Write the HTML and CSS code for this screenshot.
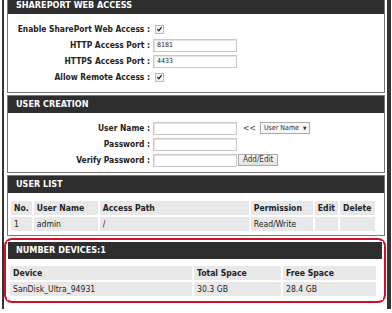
FILE: index.html
```html
<!DOCTYPE html>
<html lang="en">
  <head>
    <meta charset="UTF-8">
    <title>SharePort</title>
    <link rel="stylesheet" href="styles.css">
  </head>
  <body>
    <div id="page">
      <div class="box first">
        <div class="box-title">SHAREPORT WEB ACCESS</div>
        <div class="box-body form">
          <div class="row"><span class="label">Enable SharePort Web Access :</span><span class="check"><svg width="8" height="8" viewBox="0 0 8 8"><path d="M1.5 4.2 L3.2 6 L6.5 1.8" fill="none" stroke="#222" stroke-width="1.4"/></svg></span></div>
          <div class="row"><span class="label">HTTP Access Port :</span><span class="input">8181</span></div>
          <div class="row"><span class="label">HTTPS Access Port :</span><span class="input">4433</span></div>
          <div class="row"><span class="label">Allow Remote Access :</span><span class="check"><svg width="8" height="8" viewBox="0 0 8 8"><path d="M1.5 4.2 L3.2 6 L6.5 1.8" fill="none" stroke="#222" stroke-width="1.4"/></svg></span></div>
        </div>
      </div>

      <div class="box">
        <div class="box-title">USER CREATION</div>
        <div class="box-body form users-form">
          <div class="row"><span class="label">User Name :</span><span class="input"></span><span class="arrows">&lt;&lt;</span><span class="select">User Name <span class="tri">&#9660;</span></span></div>
          <div class="row"><span class="label">Password :</span><span class="input"></span></div>
          <div class="row"><span class="label">Verify Password :</span><span class="input"></span><span class="button">Add/Edit</span></div>
        </div>
      </div>

      <div class="box">
        <div class="box-title">USER LIST</div>
        <div class="box-body list">
          <table class="grid users">
            <tr><th class="c-no">No.</th><th class="c-user">User Name</th><th>Access Path</th><th class="c-perm">Permission</th><th class="c-edit">Edit</th><th class="c-del">Delete</th></tr>
            <tr><td>1</td><td>admin</td><td>/</td><td>Read/Write</td><td></td><td></td></tr>
          </table>
        </div>
      </div>

      <div class="marked">
        <div class="box">
          <div class="box-title">NUMBER DEVICES:1</div>
          <div class="box-body devices-body">
            <table class="grid devices">
              <tr><th>Device</th><th class="c-total">Total Space</th><th class="c-free">Free Space</th></tr>
              <tr><td>SanDisk_Ultra_94931</td><td>30.3 GB</td><td>28.4 GB</td></tr>
            </table>
          </div>
        </div>
      </div>
    </div>
  </body>
</html>
```

FILE: styles.css
```css
* {
  box-sizing: border-box;
  margin: 0;
  padding: 0;
}

body {
  font-family: "DejaVu Sans Condensed", "DejaVu Sans", sans-serif;
  font-stretch: condensed;
  font-size: 8.6px;
  color: #222;
  background: white;
  width: 392px;
  height: 313px;
  overflow: hidden;
}

#page {
  margin-left: 2px;
  width: 389px;
  height: 313px;
  border-left: 2px solid #333;
  border-right: 4px solid #333;
  padding: 0 2px 0 3px;
}

.box {
  border: 1px solid #777;
  margin-bottom: 2px;
  background: white;
}

.box.first {
  margin-top: -4px;
}

.box-title {
  background: #2e2e2e;
  color: white;
  font-weight: bold;
  font-size: 9px;
  height: 17px;
  line-height: 17px;
  padding-left: 8px;
}

.form {
  padding: 7px 0 7px;
}

.users-form {
  padding: 7px 0 4px;
}

.row {
  display: flex;
  align-items: center;
  height: 16px;
}

.label {
  width: 144px;
  text-align: right;
  font-weight: bold;
  font-size: 8.4px;
  padding-right: 2px;
  white-space: nowrap;
}

.check {
  width: 9px;
  height: 9px;
  border: 1px solid #bbb;
  background: #f4f4f4;
  margin-left: 3px;
  display: flex;
  align-items: center;
  justify-content: center;
}

.input {
  width: 84px;
  height: 13px;
  border: 1px solid #c8c8c8;
  box-shadow: inset 1px 1px 0 #e4e4e4;
  font-size: 7px;
  line-height: 11px;
  padding-left: 3px;
  margin-left: 1px;
}

.arrows {
  color: #444;
  margin: 0 4px 0 6px;
}

.select {
  height: 12px;
  border: 1px solid #aaa;
  background: #f6f6f6;
  font-size: 7px;
  color: #333;
  line-height: 10px;
  padding: 0 3px;
}

.tri {
  font-size: 5px;
  margin-left: 2px;
}

.button {
  height: 12px;
  border: 1px solid #aaa;
  background: linear-gradient(#f8f8f8, #e2e2e2);
  font-size: 8px;
  line-height: 10px;
  padding: 0 4px;
  margin-left: 1px;
  color: #333;
}

.list {
  padding: 6px 7px 2px 1px;
}

.devices-body {
  padding: 5px 4px 1px 0;
}

.grid {
  width: 100%;
  border-collapse: separate;
  border-spacing: 2px;
}

.grid th,
.grid td {
  background: #e8e8e8;
  text-align: left;
  height: 14px;
  padding: 0 3px;
  white-space: nowrap;
}

.grid th {
  font-weight: bold;
}

.c-no { width: 20px; }
.c-user { width: 64px; }
.c-perm { width: 62px; }
.c-edit { width: 22px; }
.c-del { width: 35px; }

.c-total { width: 87px; }
.c-free { width: 93px; }

.marked {
  border: 2px solid #d0102a;
  border-radius: 8px;
  padding: 1px;
  margin: 2px -1px 0 -3px;
}

.marked .box {
  margin-bottom: 0;
  border-color: white;
}
```
